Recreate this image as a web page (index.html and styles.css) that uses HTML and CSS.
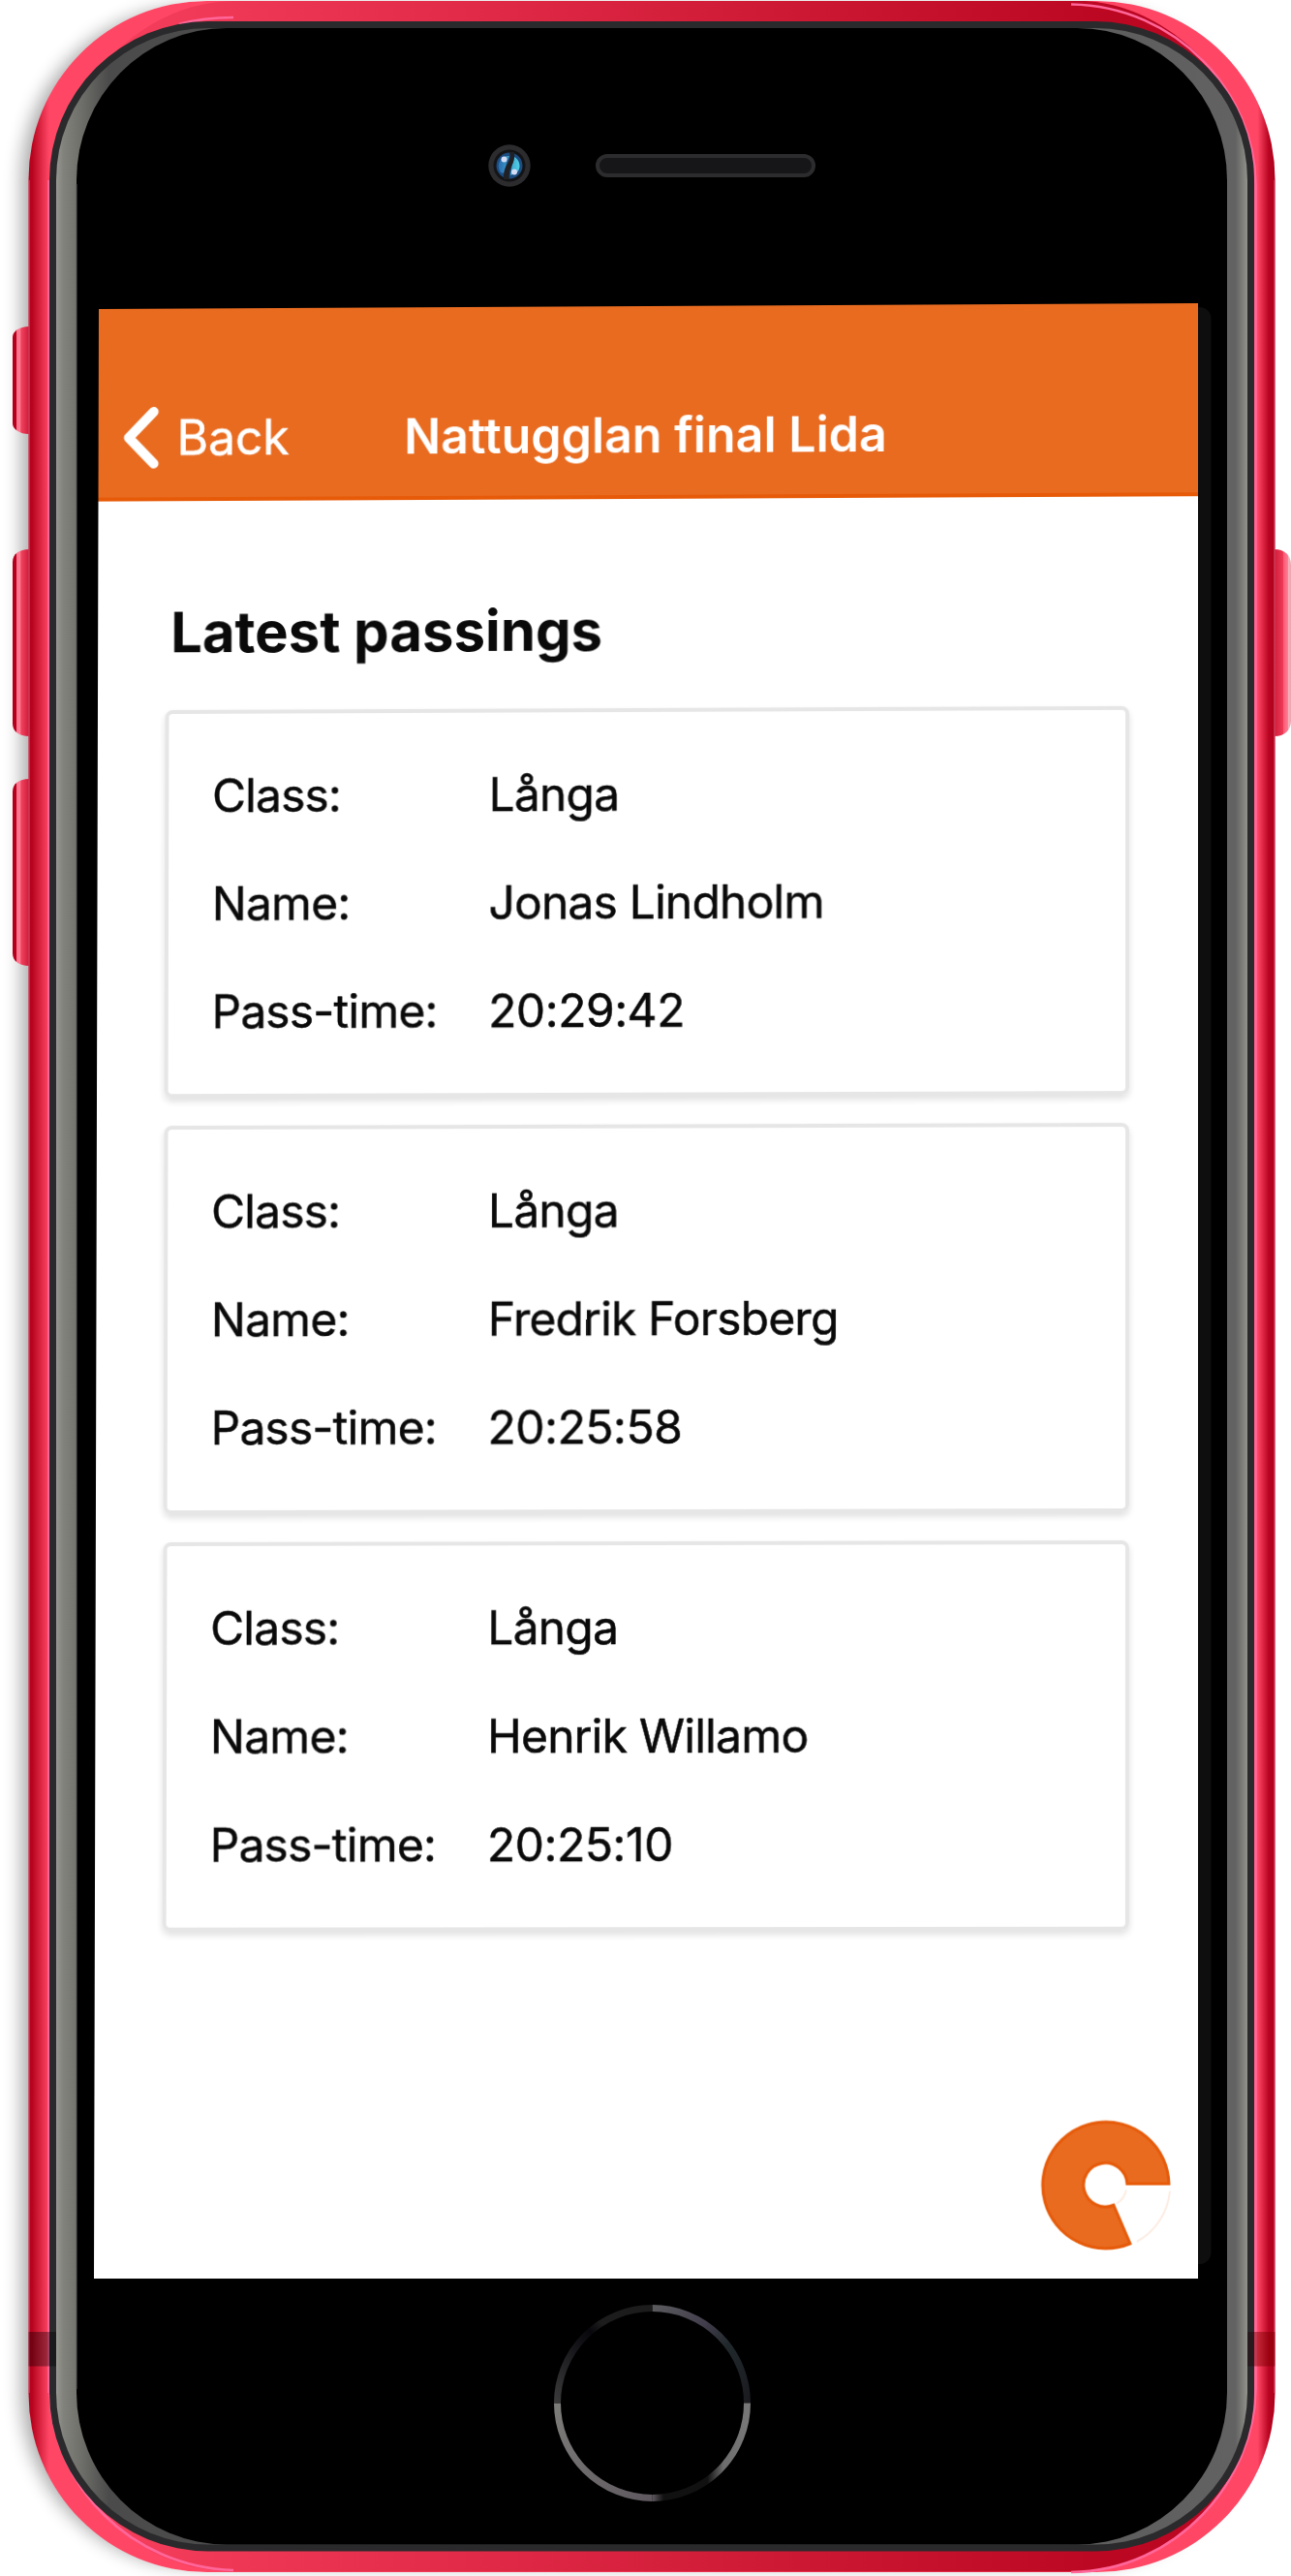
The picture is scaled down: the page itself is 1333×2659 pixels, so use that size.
FILE: index.html
```html
<!DOCTYPE html>
<html lang="en">
<head>
<meta charset="utf-8">
<title>Nattugglan final Lida</title>
<link rel="stylesheet" href="styles.css">
</head>
<body>
<div class="phone">
  <div class="shadow"></div>
  <svg class="frame" viewBox="0 0 1333 2659" aria-hidden="true">
    <defs>
      <linearGradient id="edge" gradientUnits="userSpaceOnUse" x1="29.5" x2="1316.5" y1="0" y2="0">
        <stop offset="0" stop-color="#b3001e"/><stop offset=".003" stop-color="#b8041f"/>
        <stop offset=".0165" stop-color="#ff4765"/><stop offset=".986" stop-color="#ff4765"/>
        <stop offset=".995" stop-color="#b80420"/><stop offset="1" stop-color="#b0001b"/>
      </linearGradient>
      <linearGradient id="band" gradientUnits="userSpaceOnUse" x1="100" x2="1200" y1="0" y2="0">
        <stop offset="0" stop-color="#f63f5d"/><stop offset=".95" stop-color="#bb0722"/><stop offset="1" stop-color="#bb0722"/>
      </linearGradient>
      <linearGradient id="steel" gradientUnits="userSpaceOnUse" x1="58" x2="1288" y1="0" y2="0">
        <stop offset="0" stop-color="#979891"/><stop offset=".006" stop-color="#81827b"/><stop offset=".018" stop-color="#73736e"/>
        <stop offset=".044" stop-color="#4b4b4b"/><stop offset=".12" stop-color="#4b4b4b"/><stop offset=".9" stop-color="#5e5e5e"/>
        <stop offset=".99" stop-color="#626262"/><stop offset="1" stop-color="#92938c"/>
      </linearGradient>
      <linearGradient id="key">
        <stop offset="0" stop-color="#b4001d"/><stop offset=".24" stop-color="#b4001d"/><stop offset=".25" stop-color="#ff7088"/>
        <stop offset=".45" stop-color="#ff7a91"/><stop offset=".52" stop-color="#f04360"/><stop offset="1" stop-color="#ce1a38"/>
      </linearGradient>
      <linearGradient id="power">
        <stop offset="0" stop-color="#d11d3a"/><stop offset=".5" stop-color="#ec3a57"/><stop offset=".56" stop-color="#ff5c78"/>
        <stop offset=".8" stop-color="#ff7c92"/><stop offset=".82" stop-color="#f5b5bd"/><stop offset="1" stop-color="#eda4af"/>
      </linearGradient>
    </defs>
    <g fill="url(#key)">
      <path d="M30 337C20 337 13 342 13 348V437C13 443 20 448 30 448Z"/>
      <path d="M30 567C20 567 13 572 13 580V747C13 755 20 760 30 760Z"/>
      <path d="M30 804C20 804 13 809 13 817V984C13 992 20 997 30 997Z"/>
    </g>
    <path fill="url(#power)" d="M1316 567C1326 567 1333 573 1333 583V744C1333 754 1326 760 1316 760Z"/>
    <rect x="29.5" y="1" width="1287" height="2654" rx="184" fill="url(#edge)"/>
    <path fill="url(#band)" d="M107 66C145 25 190 1 245 1H1120C1215 6 1298 100 1295 190V2470C1298 2560 1215 2654 1106 2654.500H241C180 2654 130 2625 105 2590Z"/>
    <path fill="none" stroke="#ff679a" stroke-width="2.600" d="M1106 4.500C1215 6 1296 96 1296.500 190V2466C1296 2560 1215 2654 1106 2655M51.500 2470C54 2565 135 2650 241 2653M50.500 186V2470M185 25Q210 18 241 18"/>
    <path fill="none" stroke="#d95b74" stroke-width="1" d="M30 186V2470M1316 186V2470"/>
    <rect x="51" y="22" width="1244" height="2611.500" rx="164" fill="#2a2a2c"/>
    <rect x="58" y="29" width="1230" height="2597.500" rx="157" fill="url(#steel)"/>
    <rect x="79" y="29" width="1188" height="2597.500" rx="155" ry="157" fill="#000"/>
    <path stroke="#56565a" d="M79 190V2466"/>
    <path fill="#000" fill-opacity=".36" d="M29.500 2407H58V2442.500H29.500Z"/>
    <path fill="#200006" fill-opacity=".36" d="M1288 2407H1295V2442.500H1288Z"/>
    <path fill="#7a0000" fill-opacity=".45" d="M1295 2407H1316.500V2442.500H1295Z"/>
    <rect x="1210" y="317" width="40.500" height="2020" rx="12" fill="#0e0e0e"/>
  </svg>

  <div class="sensors">
    <svg class="camera" viewBox="-22 -22 44 44" aria-hidden="true">
      <defs><linearGradient id="lens"><stop offset="0" stop-color="#2a6cae"/><stop offset="1" stop-color="#4fd0e6"/></linearGradient></defs>
      <circle r="21.700" fill="#2c2c2e"/><circle r="16.500" fill="#141416"/>
      <circle r="13.500" fill="#1c4c80"/>
      <path fill="url(#lens)" d="M0-10A10.500 10.500 0 0 0-9 7L-5 8Q-4-2 0-10ZM5-9A10.500 10.500 0 0 1 8 7L1 10Q2 0 5-9Z"/>
      <path fill="#202124" d="M0-14H5Q6-6 2 1Q-1 7 0 14H-6Q-7 6-2-2Q2-8 0-14Z"/>
      <circle cx="-5.500" cy="-6.500" r="3" fill="#d3dcf4"/><circle cx="5" cy="6.500" r="3" fill="#d3dcf4"/>
    </svg>
    <div class="speaker"></div>
  </div>

  <main class="screen">
    <header class="navbar">
      <a class="back"><svg class="chevron" viewBox="0 0 38 64" aria-hidden="true"><path d="M32.500 5 6.500 32 32.500 59"/></svg><span class="back-label">Back</span></a>
      <h1 class="title">Nattugglan final Lida</h1>
    </header>
    <section class="passings">
      <h2 class="heading">Latest passings</h2>
      <div class="list">
        <dl class="card">
          <dt>Class:</dt><dd>Långa</dd>
          <dt>Name:</dt><dd>Jonas Lindholm</dd>
          <dt>Pass-time:</dt><dd class="time">20:29:42</dd>
        </dl>
        <dl class="card">
          <dt>Class:</dt><dd>Långa</dd>
          <dt>Name:</dt><dd>Fredrik Forsberg</dd>
          <dt>Pass-time:</dt><dd class="time">20:25:58</dd>
        </dl>
        <dl class="card">
          <dt>Class:</dt><dd>Långa</dd>
          <dt>Name:</dt><dd>Henrik Willamo</dd>
          <dt>Pass-time:</dt><dd class="time">20:25:10</dd>
        </dl>
      </div>
    </section>
    <svg class="logo" viewBox="-70 -70 140 140" aria-hidden="true">
      <path fill="none" stroke="#fcece2" stroke-width="2" d="M66 6A66 66 0 0 1 32 58M21 5A22 22 0 0 1 11 19"/>
      <path fill="#e86b20" stroke="#e65a08" stroke-width="3" d="M65-1.500A65 65 0 1 0 25 60L8 20.500A22.500 22.500 0 1 1 22-1.500Z"/>
    </svg>
  </main>

  <svg class="home" viewBox="-101.500 -101.500 203 203" aria-hidden="true">
    <defs>
      <linearGradient id="h1" x1="0" y1="0" x2="1" y2="1"><stop offset="0" stop-color="#5a5a5e"/><stop offset=".35" stop-color="#433e4c"/><stop offset=".6" stop-color="#20282b"/><stop offset="1" stop-color="#1b1b20"/></linearGradient>
      <linearGradient id="h2" x1="1" y1="0" x2="0" y2="0"><stop offset="0" stop-color="#777"/><stop offset=".25" stop-color="#6e6d6d"/><stop offset=".42" stop-color="#111"/><stop offset=".88" stop-color="#111"/><stop offset="1" stop-color="#5f595f"/></linearGradient>
      <linearGradient id="h3" x1="0" y1="0" x2="1" y2="1"><stop offset="0" stop-color="#7c7c79"/><stop offset="1" stop-color="#5f595f"/></linearGradient>
      <linearGradient id="h4" x1="0" y1="1" x2="1" y2="0"><stop offset="0" stop-color="#3a3a3b"/><stop offset=".55" stop-color="#07070c"/><stop offset=".65" stop-color="#1c1c1c"/><stop offset="1" stop-color="#1c1c1c"/></linearGradient>
    </defs>
    <g fill="none" stroke-width="7">
      <path stroke="url(#h1)" d="M0-98A98 98 0 0 1 98 0"/><path stroke="url(#h2)" d="M98 0A98 98 0 0 1 0 98"/>
      <path stroke="url(#h3)" d="M0 98A98 98 0 0 1-98 0"/><path stroke="url(#h4)" d="M-98 0A98 98 0 0 1 0-98"/>
    </g>
  </svg>
</div>
</body>
</html>
```
FILE: styles.css
```css
* { box-sizing: border-box; }
body { margin: 0; background: #fff; font-family: Inter, "Liberation Sans", sans-serif; color: #0a0a0a; }
h1, h2, dl, dd { margin: 0; font-weight: inherit; }

.phone {
  position: relative;
  width: 1333px;
  height: 2659px;
  overflow: hidden;
  display: flex;
  flex-direction: column;
}
.frame { position: absolute; inset: 0; width: 100%; height: 100%; }
.shadow {
  position: absolute;
  inset: 1px 16.5px 4px 29.5px;
  border-radius: 184px;
  box-shadow: -14px 0 18px -6px rgba(0, 0, 0, .33);
}

.sensors {
  position: relative;
  display: flex;
  align-items: center;
  gap: 67px;
  height: 44px;
  margin: 149px 0 0 504px;
}
.camera { width: 44px; height: 44px; }
.speaker {
  width: 227px;
  height: 24px;
  border: 4px solid #2c2c2e;
  border-radius: 12px;
  background: #161618;
}

/* The screen sits slightly askew in the bezel. */
.screen {
  position: relative;
  display: flex;
  flex-direction: column;
  flex: none;
  width: 1139.5px;
  height: 2038.5px;
  margin: 120px 0 0 97px;
  background: #fff;
  outline: 1px solid transparent;
  will-change: transform;
  transform-origin: 0 0;
  transform: matrix3d(.992669, -.0052655, 0, -.000002583, -.0024528, .992669, 0, -.0000021526, 0, 0, 1, 0, 5, 6, 0, 1);
}

.navbar {
  flex: none;
  display: grid;
  grid-template-columns: 293px 1fr;
  align-items: end;
  height: 199.5px;
  padding: 0 0 29.5px 24.5px;
  background: #e86b20;
  border-bottom: 4px solid #e65a08;
  color: #fff;
}
.back { display: flex; align-items: center; gap: 19px; font-size: 50px; line-height: 64px; -webkit-text-stroke: .5px; }
.chevron { width: 38px; height: 64px; fill: none; stroke: #fff; stroke-width: 10; stroke-linecap: round; stroke-linejoin: round; }
.title { font-size: 50.3px; font-weight: 600; line-height: 64px; white-space: nowrap; }

.passings { padding: 101px 71px 0 70px; }
.heading { padding-left: 5.5px; font-size: 58.3px; font-weight: 700; line-height: 70px; }
.list { display: grid; gap: 29px; margin-top: 46.5px; }
.card {
  display: grid;
  grid-template-columns: 287px 1fr;
  grid-auto-rows: 112px;
  height: 402px;
  padding: 29px 0 0 45px;
  border: 4px solid #e6e6e6;
  border-radius: 8px;
  box-shadow: 0 4px 7px rgba(0, 0, 0, .12);
  font-size: 48px;
  letter-spacing: -.75px;
  line-height: 112px;
  white-space: nowrap;
  -webkit-text-stroke: .5px;
}
.time { letter-spacing: -.4px; }

.logo { width: 140px; height: 140px; margin: auto 25px 26px auto; }
.home { position: relative; width: 203px; height: 203px; margin: 27px 0 0 571.5px; }
```
